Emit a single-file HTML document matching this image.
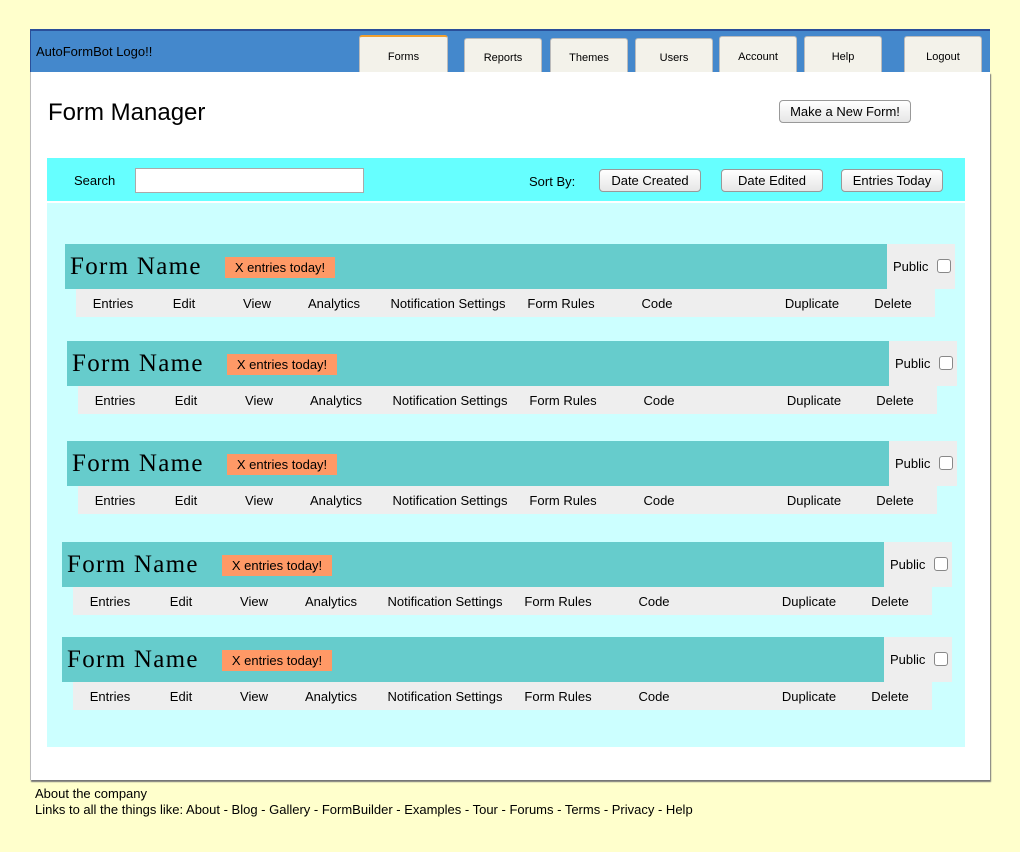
<!DOCTYPE html>
<html><head><style>
*{margin:0;padding:0;box-sizing:border-box}
body{width:1020px;height:852px;background:#ffffcc;font-family:"Liberation Sans",sans-serif;position:relative;overflow:hidden;color:#000}
.a{position:absolute}
#hdr{left:30px;top:29px;width:960px;height:43px;background:#4488cc;border-top:2px solid #2a4f9a;border-left:1px solid #2a4f9a}
#panel{left:30px;top:72px;width:960px;height:708px;background:#fff;box-shadow:1px 2px 1px #777;border-left:1px solid #bbb}
.tab{position:absolute;height:37px;background:#f3f2ea;border:1px solid #bbb;border-bottom:none;border-radius:3px 3px 0 0;font-size:11px;text-align:center;padding-top:14px}
.btn{position:absolute;height:23px;background:linear-gradient(#fff,#e6e6e6);border:1px solid #999;border-radius:4px;font-size:13px;text-align:center;line-height:21px}
.row{position:absolute;width:900px;height:74px}
.bar{position:absolute;left:0;top:0;width:822px;height:45px;background:#66cccc}
.pub{position:absolute;left:822px;top:0;width:68px;height:45px;background:#eeeeee;font-size:13px;padding:15px 0 0 6px}
.cb{position:absolute;left:50px;top:15px;width:14px;height:14px;border:1px solid #888;border-radius:3px;background:#fff}
.sub{position:absolute;left:11px;top:45px;width:859px;height:28px;background:#eeeeee;font-size:13px}
.sub span{position:absolute;top:7px;transform:translateX(-50%);white-space:nowrap}
.fn{position:absolute;left:5px;top:9px;font-family:"Liberation Serif",serif;font-size:25px;letter-spacing:1.3px}
.bd{position:absolute;left:160px;top:13px;width:110px;height:21px;background:#ff9966;font-size:13px;line-height:21px;text-align:center}
</style></head><body>
<div id="hdr" class="a"><div class="a" style="left:5px;top:13px;font-size:13px">AutoFormBot Logo!!</div></div>
<div class="tab" style="left:359px;top:35px;width:89px;border-top:2px solid #f0a030">Forms</div>
<div class="tab" style="left:464px;top:38px;width:78px;padding-top:13px">Reports</div>
<div class="tab" style="left:550px;top:38px;width:78px;padding-top:13px">Themes</div>
<div class="tab" style="left:635px;top:38px;width:78px;padding-top:13px">Users</div>
<div class="tab" style="left:719px;top:36px;width:78px">Account</div>
<div class="tab" style="left:804px;top:36px;width:78px">Help</div>
<div class="tab" style="left:904px;top:36px;width:78px">Logout</div>
<div id="panel" class="a"></div>
<div class="a" style="left:48px;top:99px;font-size:24px">Form Manager</div>
<div class="btn" style="left:779px;top:100px;width:132px">Make a New Form!</div>
<div class="a" style="left:47px;top:158px;width:918px;height:43px;background:#66ffff"></div>
<div class="a" style="left:74px;top:173px;font-size:13px">Search</div>
<div class="a" style="left:135px;top:168px;width:229px;height:25px;background:#fff;border:1px solid #aaa"></div>
<div class="a" style="left:529px;top:174px;font-size:13px">Sort By:</div>
<div class="btn" style="left:599px;top:169px;width:102px">Date Created</div>
<div class="btn" style="left:721px;top:169px;width:102px">Date Edited</div>
<div class="btn" style="left:841px;top:169px;width:102px">Entries Today</div>
<div class="a" style="left:47px;top:203px;width:918px;height:544px;background:#ccffff"></div>

<div class="row" style="left:65px;top:244px"><div class="bar"></div><div class="fn">Form Name</div><div class="bd">X entries today!</div><div class="pub">Public<div class="cb"></div></div><div class="sub"><span style="left:37px">Entries</span><span style="left:108px">Edit</span><span style="left:181px">View</span><span style="left:258px">Analytics</span><span style="left:372px">Notification Settings</span><span style="left:485px">Form Rules</span><span style="left:581px">Code</span><span style="left:736px">Duplicate</span><span style="left:817px">Delete</span></div></div>
<div class="row" style="left:67px;top:341px"><div class="bar"></div><div class="fn">Form Name</div><div class="bd">X entries today!</div><div class="pub">Public<div class="cb"></div></div><div class="sub"><span style="left:37px">Entries</span><span style="left:108px">Edit</span><span style="left:181px">View</span><span style="left:258px">Analytics</span><span style="left:372px">Notification Settings</span><span style="left:485px">Form Rules</span><span style="left:581px">Code</span><span style="left:736px">Duplicate</span><span style="left:817px">Delete</span></div></div>
<div class="row" style="left:67px;top:441px"><div class="bar"></div><div class="fn">Form Name</div><div class="bd">X entries today!</div><div class="pub">Public<div class="cb"></div></div><div class="sub"><span style="left:37px">Entries</span><span style="left:108px">Edit</span><span style="left:181px">View</span><span style="left:258px">Analytics</span><span style="left:372px">Notification Settings</span><span style="left:485px">Form Rules</span><span style="left:581px">Code</span><span style="left:736px">Duplicate</span><span style="left:817px">Delete</span></div></div>
<div class="row" style="left:62px;top:542px"><div class="bar"></div><div class="fn">Form Name</div><div class="bd">X entries today!</div><div class="pub">Public<div class="cb"></div></div><div class="sub"><span style="left:37px">Entries</span><span style="left:108px">Edit</span><span style="left:181px">View</span><span style="left:258px">Analytics</span><span style="left:372px">Notification Settings</span><span style="left:485px">Form Rules</span><span style="left:581px">Code</span><span style="left:736px">Duplicate</span><span style="left:817px">Delete</span></div></div>
<div class="row" style="left:62px;top:637px"><div class="bar"></div><div class="fn">Form Name</div><div class="bd">X entries today!</div><div class="pub">Public<div class="cb"></div></div><div class="sub"><span style="left:37px">Entries</span><span style="left:108px">Edit</span><span style="left:181px">View</span><span style="left:258px">Analytics</span><span style="left:372px">Notification Settings</span><span style="left:485px">Form Rules</span><span style="left:581px">Code</span><span style="left:736px">Duplicate</span><span style="left:817px">Delete</span></div></div>

<div class="a" style="left:35px;top:786px;font-size:13px;line-height:16px;white-space:nowrap">About the company<br>Links to all the things like: About - Blog - Gallery - FormBuilder - Examples - Tour - Forums - Terms - Privacy - Help</div>
</body></html>
